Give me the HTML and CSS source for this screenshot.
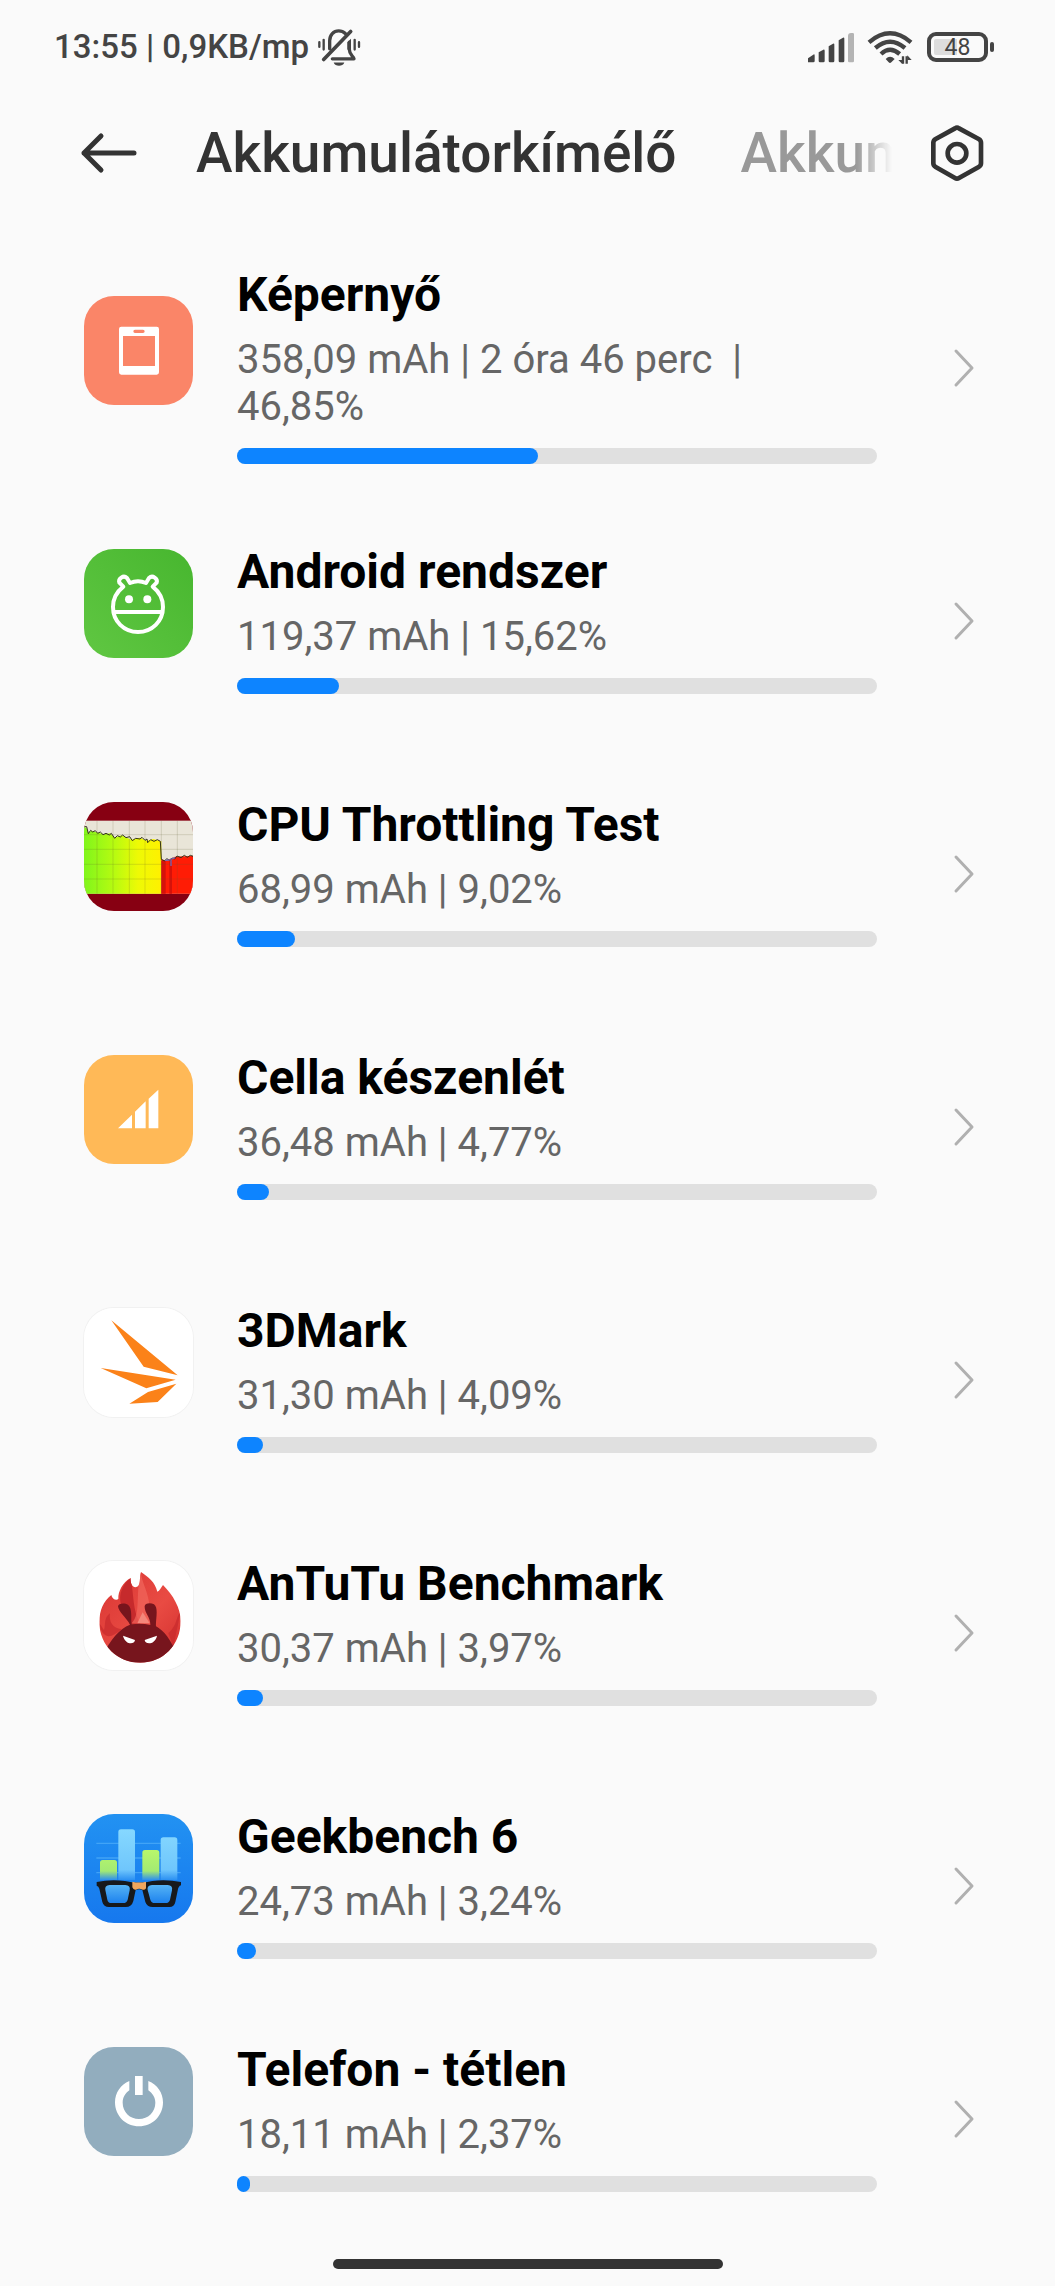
FILE: index.html
```html
<!DOCTYPE html>
<html lang="hu">
<head>
<meta charset="utf-8">
<meta name="viewport" content="width=device-width, initial-scale=1">
<title>Akkumulátorkímélő</title>
<link rel="stylesheet" href="styles.css">
</head>
<body>
<div class="screen">
  <div class="status">
    <span class="status-text">13:55 | 0,9KB/mp</span>
    <svg class="bell" viewBox="928 80 132 117" fill="none" stroke="#444" stroke-linecap="round" stroke-linejoin="round">
      <path d="M966 144V120C966 102 978 90 993 90C1001 90 1008 93 1013 98" stroke-width="10"/>
      <path d="M948 176L1029 92" stroke-width="11"/>
      <path d="M974 174H1039C1037 166 1025 162 1025 146V124" stroke-width="10"/>
      <path d="M1019 124L1030 114V150L1019 146Z" fill="#444" stroke="none"/>
      <path d="M978 185H1010C1006 198 982 198 978 185Z" fill="#444" stroke="none"/>
      <path d="M935 124V138M948 117V146M1041 117V146M1054 124V138" stroke-width="7"/>
    </svg>
    <div class="status-icons">
      <svg class="signal" viewBox="322 90 144 96" fill="#444">
        <path d="M325 184V172L343 160Q345 160 345 164V180Q345 184 341 184Z"/>
        <path d="M357 154L371 146Q375 145 375 149V180Q375 184 371 184H361Q357 184 357 180Z"/>
        <path d="M387 136L400 128Q404 127 404 131V180Q404 184 400 184H391Q387 184 387 180Z"/>
        <path d="M417 118L430 110Q434 109 434 113V180Q434 184 430 184H421Q417 184 417 180Z"/>
        <path fill="#b4b4b4" d="M445 105Q445 96 454 96H459Q463 96 463 100V180Q463 184 459 184H449Q445 184 445 180Z"/>
      </svg>
      <svg class="wifi" viewBox="500 87 138 105" fill="none" stroke="#444" stroke-width="13">
        <path d="M506 124Q569 70 632 124"/>
        <path d="M525 141Q569 103 614 141"/>
        <path d="M542 159Q569 134 598 159"/>
        <path d="M556 174Q569 160 583 174L573 184Q569 188 565 184Z" fill="#444" stroke="none"/>
        <path d="M608 166V188M619 166V188" stroke-width="7"/>
        <path d="M594 177H606V189ZM621 177H634L621 163Z" fill="#444" stroke="none"/>
      </svg>
      <div class="battery"><span>48</span></div>
    </div>
  </div>

  <header class="header">
    <button class="icon-button back" aria-label="Vissza">
      <svg viewBox="0 0 58 42" fill="none" stroke="#333" stroke-width="5" stroke-linecap="round" stroke-linejoin="round">
        <path d="M54 21H4M21 4L4 21L21 38"/>
      </svg>
    </button>
    <nav class="tabs">
      <a class="tab active" href="#saver">Akkumulátorkímélő</a>
      <a class="tab" href="#battery">Akkumulátor</a>
    </nav>
    <button class="icon-button settings" aria-label="Beállítások">
      <svg viewBox="688 363 162 174" fill="none" stroke="#333" stroke-width="14" stroke-linejoin="round">
        <path d="M763 376Q769 372 775 376L834 408Q841 412 841 419V481Q841 488 834 492L775 525Q769 529 763 525L705 492Q698 488 698 481V419Q698 412 705 408Z"/>
        <circle cx="769" cy="451" r="28"/>
      </svg>
    </button>
  </header>

  <main>
    <ul class="list">
      <li><a class="row" href="#screen">
        <svg class="app" viewBox="72 108 327 327">
          <rect x="72" y="108" width="327" height="327" fill="#fa8568"/>
          <path fill="#fff" fill-rule="evenodd" d="M184 200H290Q297 200 297 207V337Q297 344 290 344H184Q177 344 177 337V207Q177 200 184 200ZM189 228V318H285V228ZM225 209Q220 209 220 214Q220 219 225 219H249Q254 219 254 214Q254 209 249 209Z"/>
        </svg>
        <div class="info"><h2>Képernyő</h2><p>358,09 mAh | 2 óra 46 perc &nbsp;|<br>46,85%</p><div class="track"><div class="fill" style="width:47%"></div></div></div>
        <svg class="chevron" viewBox="0 0 22 40"><path d="M3 3L19 20L3 37"/></svg>
      </a></li>
      <li><a class="row" href="#android">
        <svg class="app" viewBox="72 57 327 327">
          <defs><linearGradient id="green" x1="0" y1="1" x2="1" y2="0"><stop offset="0" stop-color="#60c742"/><stop offset="1" stop-color="#47b62f"/></linearGradient></defs>
          <rect x="72" y="57" width="327" height="327" fill="url(#green)"/>
          <g fill="none" stroke="#fff" stroke-width="12" stroke-linejoin="round">
            <path d="M190 170L178 158C174 146 190 134 201 144L210 159Q234 148 258 159L267 144C278 134 294 146 290 158L278 170C297 185 309 206 309 231C309 274 276 306 234 306C192 306 159 274 159 231C159 206 171 185 190 170Z"/>
            <path d="M160 246H308"/>
          </g>
          <circle cx="207" cy="208" r="12" fill="#fff"/><circle cx="262" cy="208" r="12" fill="#fff"/>
        </svg>
        <div class="info"><h2>Android rendszer</h2><p>119,37 mAh | 15,62%</p><div class="track"><div class="fill" style="width:16%"></div></div></div>
        <svg class="chevron" viewBox="0 0 22 40"><path d="M3 3L19 20L3 37"/></svg>
      </a></li>
      <li><a class="row" href="#cpu">
        <svg class="app" viewBox="42 36 327 327">
          <defs><linearGradient id="heat" gradientUnits="userSpaceOnUse" x1="42" y1="0" x2="274" y2="0"><stop offset="0" stop-color="#80f51c"/><stop offset=".4" stop-color="#b8fb10"/><stop offset=".7" stop-color="#eefa05"/><stop offset="1" stop-color="#fff000"/></linearGradient></defs>
          <rect x="42" y="36" width="327" height="327" fill="#870012"/>
          <rect x="42" y="92" width="327" height="219" fill="#e9e5d8"/>
          <path fill="url(#heat)" d="M42 311V110L50 115L56 130L64 122L84 128L104 133L120 130L135 143L154 136L184 149L210 143L230 152L250 147L274 154V311Z"/>
          <path fill="#ff1c05" d="M274 311V208L290 212L315 200L369 197V311Z"/>
          <path fill="#d5120a" d="M274 212H287V311H274ZM298 212H306V311H298Z"/>
          <path stroke="#625b30" stroke-opacity=".28" stroke-width="2" d="M81 92V311M129 92V311M178 92V311M225 92V311M274 92V311M322 92V311M42 134H369M42 178H369M42 223H369M42 267H369"/>
          <path fill="none" stroke="#34331c" stroke-width="3" d="M42 110H50L55 131L62 121L68 126L76 122L83 130L91 126L99 134L108 130L118 135L124 130L134 145L142 137L151 141L158 135L168 143L179 140L187 152L197 145L210 147L216 142L225 151L231 147L233 158L242 149L252 154L262 149L271 154L274 208L284 213L290 206L301 212L306 204L314 207L321 198L333 203L343 196L352 202L361 196L369 199"/>
          <path fill="none" stroke="#7767b5" stroke-width="4" d="M285 211L299 210M303 205V228M306 207L315 203"/>
        </svg>
        <div class="info"><h2>CPU Throttling Test</h2><p>68,99 mAh | 9,02%</p><div class="track"><div class="fill" style="width:9%"></div></div></div>
        <svg class="chevron" viewBox="0 0 22 40"><path d="M3 3L19 20L3 37"/></svg>
      </a></li>
      <li><a class="row" href="#cell">
        <svg class="app" viewBox="42 45 327 327">
          <rect x="42" y="45" width="327" height="327" fill="#ffb957"/>
          <path fill="#fff" d="M144 265L186 224V265ZM195 215L227 184V265H195ZM236 176L265 149V265H236Z"/>
        </svg>
        <div class="info"><h2>Cella készenlét</h2><p>36,48 mAh | 4,77%</p><div class="track"><div class="fill" style="width:5%"></div></div></div>
        <svg class="chevron" viewBox="0 0 22 40"><path d="M3 3L19 20L3 37"/></svg>
      </a></li>
      <li><a class="row" href="#3dmark">
        <svg class="app light" viewBox="42 39 327 327">
          <rect x="42" y="39" width="327" height="327" fill="#fff"/>
          <path fill="#fb8219" d="M124 76L323 241L221 215ZM92 219L317 254L229 280ZM319 266L263 321L178 326L234 291Z"/>
        </svg>
        <div class="info"><h2>3DMark</h2><p>31,30 mAh | 4,09%</p><div class="track"><div class="fill" style="width:4%"></div></div></div>
        <svg class="chevron" viewBox="0 0 22 40"><path d="M3 3L19 20L3 37"/></svg>
      </a></li>
      <li><a class="row" href="#antutu">
        <svg class="app light" viewBox="42 33 327 327">
          <defs>
            <linearGradient id="flame" x1="0" y1="0" x2="1" y2="1"><stop offset="0" stop-color="#d83432"/><stop offset=".55" stop-color="#e94b43"/><stop offset="1" stop-color="#cf2b2b"/></linearGradient>
            <clipPath id="flame-shape"><path d="M124 135C126 146 138 153 145 147C144 124 158 97 182 84C180 105 194 121 206 106C212 96 208 80 213 66C236 82 255 96 262 125C269 123 273 113 279 105C309 135 332 174 332 213C332 286 278 338 211 338C143 338 88 287 88 216C88 181 100 154 124 135Z"/></clipPath>
          </defs>
          <rect x="42" y="33" width="327" height="327" fill="#fff"/>
          <g clip-path="url(#flame-shape)">
            <rect x="80" y="60" width="260" height="285" fill="url(#flame)"/>
            <path fill="#c62a2c" d="M182 84C155 103 142 145 157 170L180 222L210 220C188 180 192 138 182 84Z"/>
            <path fill="#f1665d" opacity=".7" d="M213 66C214 105 246 130 240 220H185C214 190 195 135 213 66Z"/>
            <path fill="#c4282b" opacity=".65" d="M88 220C96 265 120 270 155 238C128 235 116 215 120 190C100 205 108 222 102 240ZM332 185C315 205 325 220 295 250L310 290Z"/>
            <path fill="#f4877b" d="M218 187L239 220H202Z"/>
            <path fill="#77151d" d="M95 320C124 265 148 237 180 224C170 204 145 185 144 169C144 160 163 157 174 164C188 175 182 206 185 223Q214 219 241 225C242 202 223 190 224 169C224 159 242 157 252 163C267 174 256 210 258 229C279 240 306 270 322 320V345H95Z"/>
          </g>
          <path fill="#fff" d="M159 257L195 270C193 285 166 285 159 257ZM261 257L224 270C226 285 255 285 261 257Z"/>
        </svg>
        <div class="info"><h2>AnTuTu Benchmark</h2><p>30,37 mAh | 3,97%</p><div class="track"><div class="fill" style="width:4%"></div></div></div>
        <svg class="chevron" viewBox="0 0 22 40"><path d="M3 3L19 20L3 37"/></svg>
      </a></li>
      <li><a class="row" href="#geekbench">
        <svg class="app" viewBox="42 42 327 327">
          <defs>
            <linearGradient id="gb" x1="0" y1="0" x2="0" y2="1"><stop offset="0" stop-color="#2292f2"/><stop offset="1" stop-color="#1678ee"/></linearGradient>
            <linearGradient id="sky" gradientUnits="userSpaceOnUse" x1="0" y1="88" x2="0" y2="240"><stop offset="0" stop-color="#86d8ff"/><stop offset=".8" stop-color="#6fc6fc"/><stop offset="1" stop-color="#2b90f2"/></linearGradient>
            <linearGradient id="lime" gradientUnits="userSpaceOnUse" x1="0" y1="150" x2="0" y2="240"><stop offset="0" stop-color="#b8f76b"/><stop offset=".7" stop-color="#a3ea73"/><stop offset="1" stop-color="#2c8ef0"/></linearGradient>
            <linearGradient id="lens" x1="0" y1="0" x2="0" y2="1"><stop offset="0" stop-color="#55b3f5"/><stop offset="1" stop-color="#1d82ee"/></linearGradient>
          </defs>
          <rect x="42" y="42" width="327" height="327" fill="url(#gb)"/>
          <path stroke="#55b2fa" stroke-opacity=".65" stroke-width="4" d="M79 130H332M79 174H332M79 218H332"/>
          <path fill="url(#sky)" d="M145 96Q145 88 153 88H187Q195 88 195 96V240H145ZM272 120Q272 112 280 112H314Q322 112 322 120V240H272Z"/>
          <path fill="url(#lime)" d="M90 188Q90 180 98 180H133Q141 180 141 188V240H90ZM217 158Q217 150 225 150H260Q268 150 268 158V240H217Z"/>
          <path fill="#17191c" d="M80 246Q120 238 165 243Q185 248 206 248Q229 248 247 243Q290 238 333 246V256Q325 258 323 272L316 306Q313 321 298 321H248Q231 321 226 306L217 270Q208 265 197 270L190 303Q185 321 167 321H117Q101 321 97 306L88 266Q86 259 80 257Z"/>
          <path fill="url(#lens)" d="M119 255H166Q182 256 179 271L173 299Q170 309 160 309H124Q114 309 112 299L106 270Q103 257 119 255ZM246 255H293Q309 256 306 271L300 299Q297 309 287 309H254Q244 309 241 299L233 270Q230 257 246 255Z"/>
          <path fill="#efa65e" d="M187 245Q207 250 228 245V265Q224 271 218 269Q207 263 198 269Q190 271 187 262Z"/>
        </svg>
        <div class="info"><h2>Geekbench 6</h2><p>24,73 mAh | 3,24%</p><div class="track"><div class="fill" style="width:3%"></div></div></div>
        <svg class="chevron" viewBox="0 0 22 40"><path d="M3 3L19 20L3 37"/></svg>
      </a></li>
      <li><a class="row" href="#idle">
        <svg class="app" viewBox="42 51 327 327">
          <rect x="42" y="51" width="327" height="327" fill="#92adbe"/>
          <path fill="#fff" d="M195 138H218V195H195ZM178 153V181C165 190 158 203 158 218C158 246 180 267 207 267C234 267 256 246 256 218C256 203 248 190 235 181V153C262 164 279 188 279 217C279 258 247 289 207 289C167 289 135 258 135 217C135 188 152 164 178 153Z"/>
        </svg>
        <div class="info"><h2>Telefon - tétlen</h2><p>18,11 mAh | 2,37%</p><div class="track"><div class="fill" style="width:2%"></div></div></div>
        <svg class="chevron" viewBox="0 0 22 40"><path d="M3 3L19 20L3 37"/></svg>
      </a></li>
    </ul>
  </main>
  <div class="home-bar"></div>
</div>
</body>
</html>
```

FILE: styles.css
```css
* {
  box-sizing: border-box;
}

body {
  margin: 0;
  background: #fafafa;
  color: #000;
  font-family: Roboto, "Liberation Sans", sans-serif;
}

svg {
  display: block;
  flex: none;
}

.screen {
  display: flex;
  flex-direction: column;
  min-height: 100vh;
  overflow: hidden;
}

/* Status bar */
.status {
  display: flex;
  align-items: center;
  height: 94px;
  padding: 0 60px 0 54px;
  color: #444;
}

.status-text {
  font-size: 33px;
  font-weight: 500;
  line-height: 40px;
  white-space: pre;
}

.bell {
  width: 44px;
  height: 40px;
  margin-left: 8px;
}

.status-icons {
  display: flex;
  align-items: center;
  gap: 12px;
  margin-left: auto;
}

.signal {
  width: 48px;
  height: 32px;
}

.wifi {
  width: 46px;
  height: 35px;
}

.battery {
  position: relative;
  width: 61px;
  height: 30px;
  margin: 0 7px 0 2px;
  padding: 3px;
  border: 4px solid #444;
  border-radius: 9px;
  background: linear-gradient(90deg, #ddd 48%, transparent 48%) content-box;
  font-size: 23px;
  line-height: 18px;
  text-align: center;
}

.battery::after {
  content: "";
  position: absolute;
  top: 6px;
  right: -10px;
  width: 4px;
  height: 10px;
  border-radius: 2px;
  background: #444;
}

/* Header */
.header {
  display: flex;
  align-items: center;
  height: 118px;
  padding: 0 71px 0 80px;
}

.icon-button {
  flex: none;
  padding: 0;
  border: 0;
  background: none;
}

.back svg {
  width: 58px;
  height: 42px;
}

.settings svg {
  width: 54px;
  height: 58px;
}

.tabs {
  display: flex;
  flex: 1;
  gap: 64px;
  margin: 0 38px 0 58px;
  overflow: hidden;
  white-space: nowrap;
  -webkit-mask-image: linear-gradient(270deg, transparent, #000 36px);
  mask-image: linear-gradient(270deg, transparent, #000 36px);
}

.tab {
  color: #999;
  font-size: 55px;
  font-weight: 500;
  line-height: 64px;
  text-decoration: none;
}

.tab.active {
  color: #333;
}

/* Consumption list */
.list {
  margin: 0;
  padding: 29px 0 0;
  list-style: none;
}

.row {
  display: flex;
  align-items: center;
  min-height: 253px;
  padding: 0 80px 0 84px;
  color: inherit;
  text-decoration: none;
}

.list li:last-child .row {
  min-height: 213px;
}

.app {
  width: 109px;
  height: 109px;
  margin-bottom: 34px;
  border-radius: 30px;
}

.app.light {
  box-shadow: 0 0 0 1px #f1f1f1;
}

.info {
  flex: 1;
  margin: 0 76px 4px 44px;
}

.info h2 {
  margin: 0 0 13px;
  font-size: 48px;
  font-weight: 700;
  line-height: 56px;
}

.info p {
  margin: 0 0 18px;
  color: #666;
  font-size: 40px;
  line-height: 47px;
}

.track {
  height: 16px;
  border-radius: 8px;
  background: #e0e0e0;
}

.fill {
  height: 100%;
  border-radius: 8px;
  background: #0d84ff;
}

.chevron {
  width: 22px;
  height: 40px;
  fill: none;
  stroke: #b0b0b0;
  stroke-width: 3;
  stroke-linecap: round;
  stroke-linejoin: round;
}

.home-bar {
  width: 390px;
  max-width: 50%;
  height: 10px;
  margin: auto auto 17px;
  border-radius: 5px;
  background: #333;
}
```
